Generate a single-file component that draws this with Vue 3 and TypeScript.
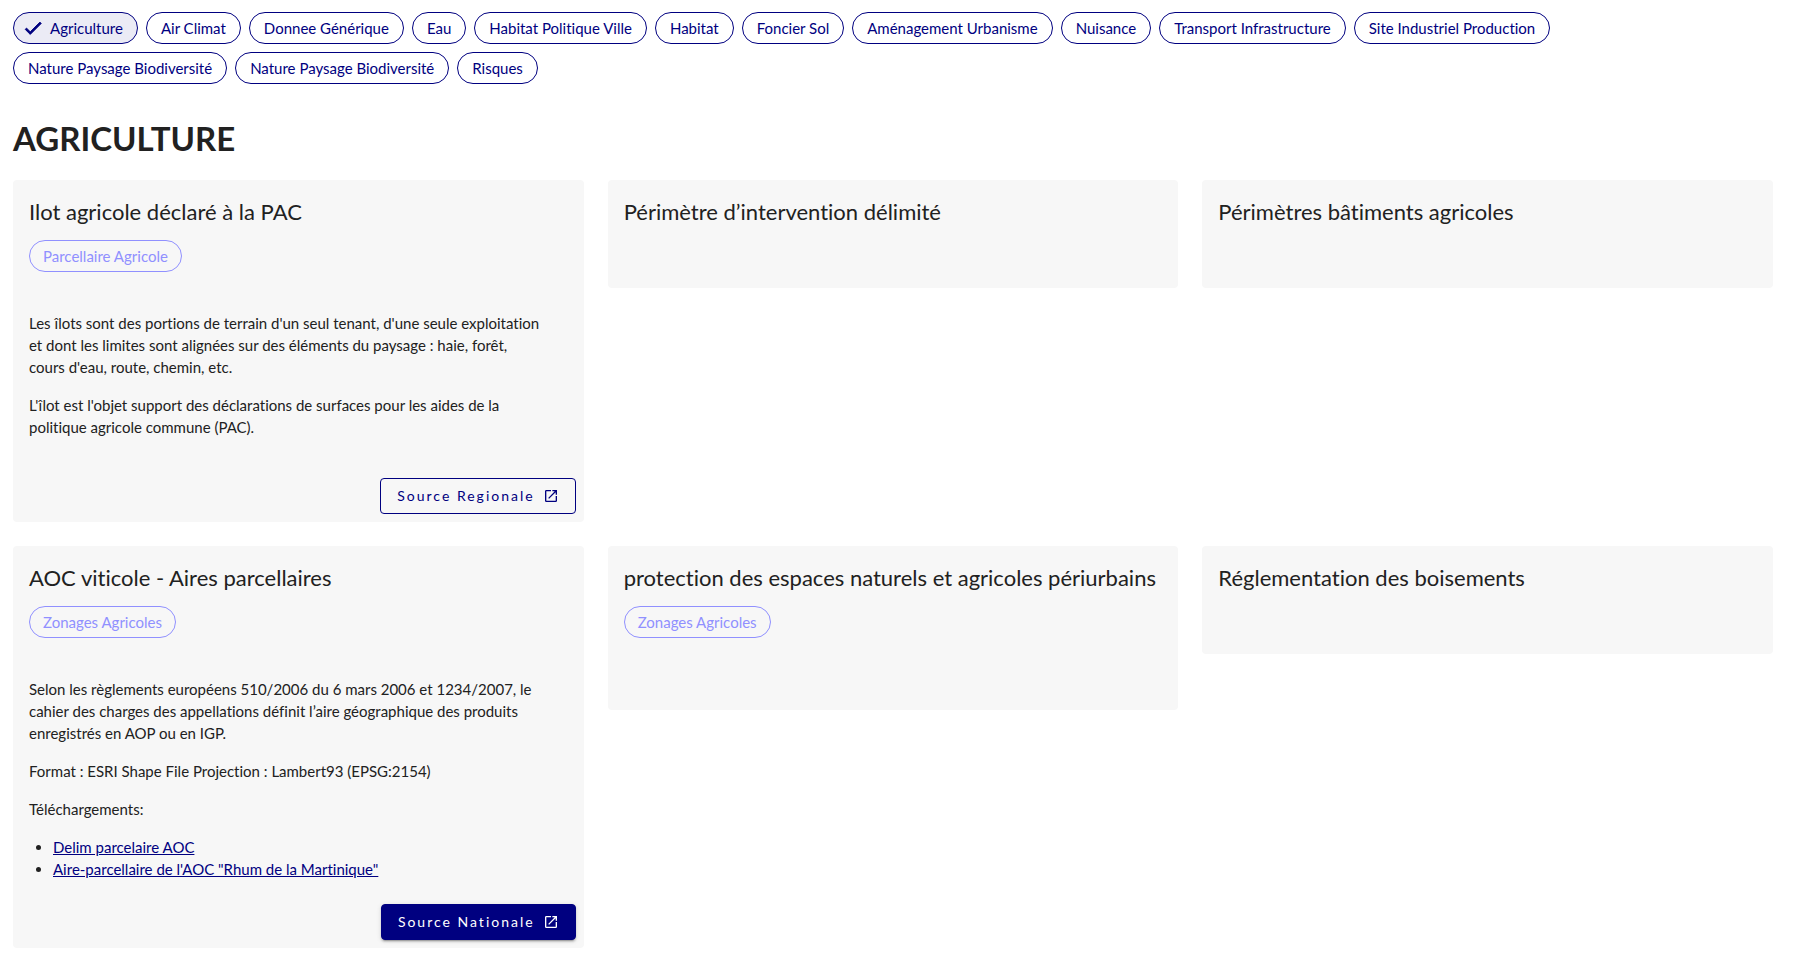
<script setup lang="ts">
import { ref, computed } from 'vue'

interface Link {
  label: string
  href: string
}

interface Source {
  label: string
  filled: boolean
}

interface Card {
  title: string
  tag?: string
  paragraphs?: string[]
  links?: Link[]
  source?: Source
}

const themes: string[] = [
  'Agriculture',
  'Air Climat',
  'Donnee Générique',
  'Eau',
  'Habitat Politique Ville',
  'Habitat',
  'Foncier Sol',
  'Aménagement Urbanisme',
  'Nuisance',
  'Transport Infrastructure',
  'Site Industriel Production',
  'Nature Paysage Biodiversité',
  'Nature Paysage Biodiversité',
  'Risques',
]

const selected = ref<number>(0)
const heading = computed<string>(() => themes[selected.value])

const cards: Card[] = [
  {
    title: 'Ilot agricole déclaré à la PAC',
    tag: 'Parcellaire Agricole',
    paragraphs: [
      "Les îlots sont des portions de terrain d'un seul tenant, d'une seule exploitation et dont les limites sont alignées sur des éléments du paysage : haie, forêt, cours d'eau, route, chemin, etc.",
      "L'îlot est l'objet support des déclarations de surfaces pour les aides de la politique agricole commune (PAC).",
    ],
    source: { label: 'Source Regionale', filled: false },
  },
  { title: 'Périmètre d’intervention délimité' },
  { title: 'Périmètres bâtiments agricoles' },
  {
    title: 'AOC viticole - Aires parcellaires',
    tag: 'Zonages Agricoles',
    paragraphs: [
      'Selon les règlements européens 510/2006 du 6 mars 2006 et 1234/2007, le cahier des charges des appellations définit l’aire géographique des produits enregistrés en AOP ou en IGP.',
      'Format : ESRI Shape File Projection : Lambert93 (EPSG:2154)',
      'Téléchargements:',
    ],
    links: [
      { label: 'Delim parcelaire AOC', href: '#delim-parcellaire' },
      { label: 'Aire-parcellaire de l\'AOC "Rhum de la Martinique"', href: '#rhum-martinique' },
    ],
    source: { label: 'Source Nationale', filled: true },
  },
  { title: 'protection des espaces naturels et agricoles périurbains', tag: 'Zonages Agricoles' },
  { title: 'Réglementation des boisements' },
]
</script>

<template>
  <main class="page">
    <nav class="themes" aria-label="Thématiques">
      <button
        v-for="(theme, i) in themes"
        :key="i"
        type="button"
        class="chip"
        :class="{ active: i === selected }"
        :aria-pressed="i === selected"
        @click="selected = i"
      >
        <svg v-if="i === selected" class="check" viewBox="0 0 24 24" aria-hidden="true">
          <path d="M21,7L9,19L3.5,13.5L4.91,12.09L9,16.17L19.59,5.59L21,7Z" />
        </svg>
        {{ theme }}
      </button>
    </nav>

    <h1 class="heading">{{ heading }}</h1>

    <div class="grid">
      <article v-for="card in cards" :key="card.title" class="card">
        <h2 class="title">{{ card.title }}</h2>
        <div v-if="card.tag" class="tags">
          <span class="chip tag">{{ card.tag }}</span>
        </div>
        <div class="text">
          <p v-for="p in card.paragraphs" :key="p">{{ p }}</p>
          <ul v-if="card.links">
            <li v-for="link in card.links" :key="link.href">
              <a :href="link.href">{{ link.label }}</a>
            </li>
          </ul>
        </div>
        <div class="actions">
          <button v-if="card.source" type="button" class="btn" :class="{ filled: card.source.filled }">
            {{ card.source.label }}
            <svg class="open" viewBox="0 0 24 24" aria-hidden="true">
              <path
                d="M14,3V5H17.59L7.76,14.83L9.17,16.24L19,6.41V10H21V3M19,19H5V5H12V3H5C3.89,3 3,3.9 3,5V19A2,2 0 0,0 5,21H19A2,2 0 0,0 21,19V12H19V19Z"
              />
            </svg>
          </button>
        </div>
      </article>
    </div>
  </main>
</template>

<style>
body {
  margin: 0;
  background: #fff;
}
</style>

<style scoped>
.page {
  padding: 12px 37px 0 13px;
  font-family: Lato, 'Noto Sans', sans-serif;
  font-size: 15px;
  font-variant-ligatures: none;
  line-height: 22px;
  color: #212121;
}

.themes {
  display: flex;
  flex-wrap: wrap;
  gap: 8px;
  padding-right: 200px;
}

.chip {
  display: inline-flex;
  align-items: center;
  box-sizing: border-box;
  height: 32px;
  padding: 0 13px;
  border: 1px solid #000080;
  border-radius: 16px;
  background: transparent;
  color: #000080;
  font: inherit;
  font-variant-ligatures: none;
  line-height: 20px;
  white-space: nowrap;
}

button.chip {
  padding: 0 14px;
  cursor: pointer;
}

.chip.active {
  background: #ebebf5;
}

.check {
  width: 22px;
  height: 22px;
  margin: 0 6px 0 -6px;
  fill: currentColor;
  stroke: currentColor;
}

.heading {
  margin: 32px 0 20px;
  font-size: 33px;
  font-weight: 700;
  line-height: 44px;
  text-transform: uppercase;
}

.grid {
  display: grid;
  grid-template-columns: repeat(3, minmax(0, 1fr));
  align-items: start;
  gap: 24px;
}

.card {
  border-radius: 4px;
  background: #f7f7f7;
}

.title {
  margin: 0;
  padding: 16px 16px 12px;
  font-size: 22px;
  font-weight: 400;
  line-height: 32px;
}

.tags {
  display: flex;
  padding: 0 16px 24px;
}

.chip.tag {
  border-color: #9090ff;
  color: #9090ff;
}

.text {
  padding: 16px;
}

.text p {
  margin: 0 0 16px;
  padding-right: 24px;
}

.text ul {
  margin: 0;
  padding-left: 24px;
}

.text a {
  color: #000080;
}

.actions {
  display: flex;
  justify-content: flex-end;
  padding: 8px;
}

.btn {
  display: inline-flex;
  align-items: center;
  box-sizing: border-box;
  height: 36px;
  padding: 0 16px;
  border: 1px solid #000080;
  border-radius: 4px;
  background: transparent;
  color: #000080;
  font: inherit;
  font-size: 14px;
  letter-spacing: 2px;
  cursor: pointer;
}

.btn.filled {
  background: #000080;
  color: #fff;
  box-shadow: 0 3px 1px -2px rgba(0, 0, 0, 0.2), 0 2px 2px 0 rgba(0, 0, 0, 0.14), 0 1px 5px 0 rgba(0, 0, 0, 0.12);
}

.open {
  width: 16px;
  height: 16px;
  margin-left: 8px;
  fill: currentColor;
}
</style>
